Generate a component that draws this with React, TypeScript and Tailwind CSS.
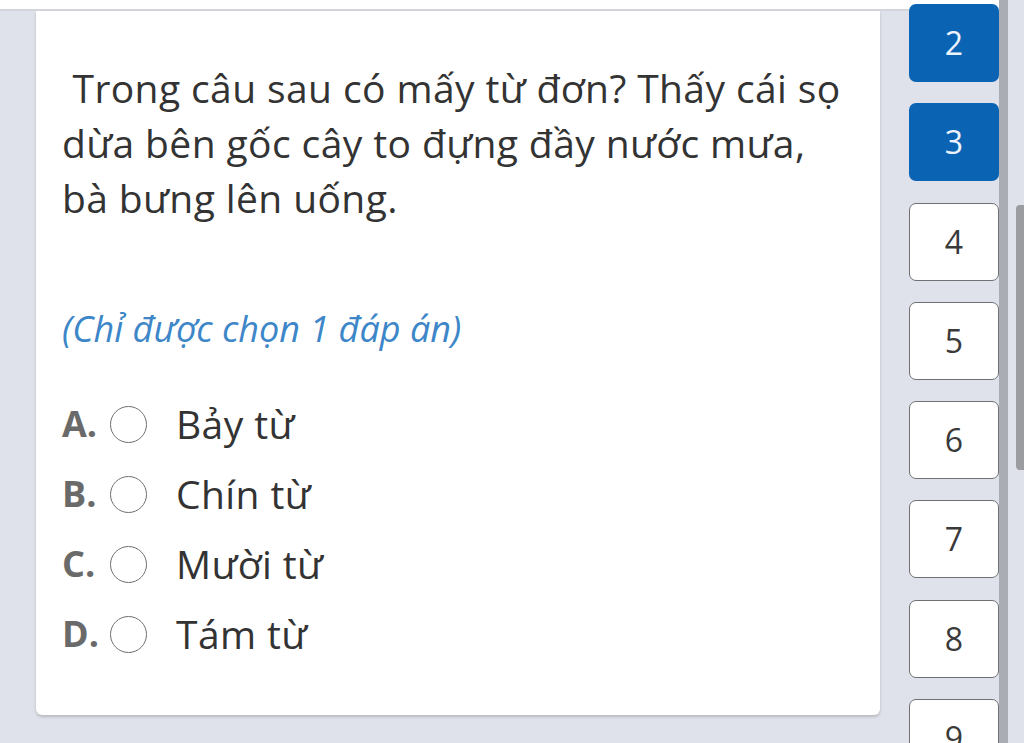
import React from "react";

const font = { fontFamily: '"Open Sans", "Noto Sans", sans-serif' };

function NumBtn({ n, active }: { n: number; active?: boolean }) {
  return (
    <div
      className={
        active
          ? "h-[78px] w-[90px] shrink-0 rounded-[7px] bg-[#0b63b4] flex items-center justify-center text-[32px] text-[#eef4ff]"
          : "h-[78px] w-[90px] shrink-0 rounded-[7px] bg-white border-[1.5px] border-[#6f7074] flex items-center justify-center text-[32px] text-[#3a3a3a]"
      }
    >
      {n}
    </div>
  );
}

function Option({ letter, text }: { letter: string; text: string }) {
  return (
    <div className="h-[70px] flex items-center">
      <span className="w-[48px] text-[36px] font-bold text-[#6a6a6a]">{letter}</span>
      <span className="w-[37px] h-[37px] rounded-full border-[1.5px] border-[#707070] shrink-0" />
      <span className="ml-[29px] text-[39px] tracking-[0.4px] text-[#333333]">{text}</span>
    </div>
  );
}

export default function App() {
  return (
    <div className="w-[1024px] h-[743px] bg-[#dfe2ea] relative overflow-hidden" style={font}>
      <div className="h-[11px] w-[1008px] bg-white border-b-2 border-[#d3d5da]" />
      <div className="flex">
        <div className="ml-[36px] w-[844px] h-[704px] bg-white rounded-b-[6px] shadow-[0_2px_3px_rgba(0,0,0,0.18)] pl-[26px] pt-[49px]">
          <div className="text-[39px] tracking-[0.4px] leading-[55px] text-[#333333] whitespace-nowrap">
            <div>{"\u00a0"}Trong câu sau có mấy từ đơn? Thấy cái sọ</div>
            <div>dừa bên gốc cây to đựng đầy nước mưa,</div>
            <div>bà bưng lên uống.</div>
          </div>
          <div className="mt-[82px] text-[36px] leading-[44px] italic text-[#3d86c8] whitespace-nowrap">
            (Chỉ được chọn 1 đáp án)
          </div>
          <div className="mt-[38px] flex flex-col">
            <Option letter="A." text="Bảy từ" />
            <Option letter="B." text="Chín từ" />
            <Option letter="C." text="Mười từ" />
            <Option letter="D." text="Tám từ" />
          </div>
        </div>
      </div>
      <div className="absolute left-[909px] top-[4px] flex flex-col gap-[21.3px]">
        <NumBtn n={2} active />
        <NumBtn n={3} active />
        <NumBtn n={4} />
        <NumBtn n={5} />
        <NumBtn n={6} />
        <NumBtn n={7} />
        <NumBtn n={8} />
        <NumBtn n={9} />
      </div>
      <div className="absolute left-[999px] top-0 w-[9px] h-[743px] bg-[#abadb4]" />
      <div className="absolute left-[1016px] top-[205px] w-[8px] h-[265px] bg-[#9b9c9f] rounded-l-[4px]" />
    </div>
  );
}
